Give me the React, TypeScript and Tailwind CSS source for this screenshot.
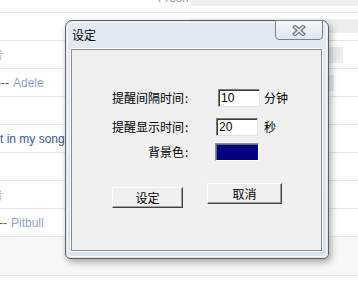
import React from "react";

const cjk = "font-['Noto_Sans_CJK_SC','Noto_Sans',sans-serif]";

function Row({ children, className = "" }: { children?: React.ReactNode; className?: string }) {
  return (
    <div className={`relative h-[28px] border-b border-[#e6e6e6] flex items-center ${className}`}>
      {children}
    </div>
  );
}

function CloseIcon() {
  return (
    <svg width="14" height="11" viewBox="0 0 14 11">
      <g strokeLinecap="square">
        <line x1="3" y1="2" x2="11" y2="9" stroke="#6a6f76" strokeWidth="4" />
        <line x1="11" y1="2" x2="3" y2="9" stroke="#6a6f76" strokeWidth="4" />
        <line x1="3" y1="2" x2="11" y2="9" stroke="#eef1f5" strokeWidth="1.6" />
        <line x1="11" y1="2" x2="3" y2="9" stroke="#eef1f5" strokeWidth="1.6" />
      </g>
    </svg>
  );
}

function Colon() {
  return <span className="inline-block w-[6px] pl-[1px] text-left">:</span>;
}

export default function App() {
  const sunken =
    "border border-t-[#7a7a7a] border-l-[#7a7a7a] border-r-[#e2e2e2] border-b-[#e2e2e2] shadow-[inset_1px_1px_0_#3c3c3c] bg-white";
  const btn =
    "h-[21px] flex items-center justify-center bg-[#f0f0f0] border border-t-white border-l-white border-r-[#404040] border-b-[#404040] shadow-[inset_-1px_-1px_0_#a0a0a0] text-[12px] leading-none text-black";

  return (
    <div className="relative w-[358px] h-[282px] overflow-hidden bg-white font-['Liberation_Sans',Arial,sans-serif] text-[12px]">
      {/* background page */}
      <div className="flex flex-col">
        <div className="relative h-[13px] border-b border-[#e6e6e6] flex items-start">
          <div className="w-[158px]" />
          <span className="w-[33px] text-[12px] leading-[12px] -mt-[8px] text-[#9a9a9a]">Fresh</span>
          <div className="flex-1 h-[6px] bg-[#eeeeee]" />
        </div>
        <Row className="items-start">
          <div className="ml-[190px] mt-[6px] w-[168px] h-[14px] bg-[#eeeeee]" />
        </Row>
        <Row>
          <span className="-ml-[9px] text-[12px] text-[#9fb1d8]">者</span>
          <div className="absolute left-[190px] top-[6px] w-[153px] h-[16px] bg-[#ececec]" />
        </Row>
        <Row>
          <span className="-ml-[3px] text-[#555]">---</span>
          <span className="ml-[4px] text-[#8ea4d0]">Adele</span>
          <div className="absolute left-[190px] top-[6px] w-[144px] h-[16px] bg-[#ececec]" />
        </Row>
        <Row />
        <Row>
          <span className="text-[#3b5a9a]">t in my song</span>
        </Row>
        <Row />
        <Row>
          <span className="-ml-[9px] text-[12px] text-[#9fb1d8]">者</span>
        </Row>
        <Row>
          <span className="-ml-[1px] text-[#555]">--</span>
          <span className="ml-[4px] text-[#8ea4d0]">Pitbull</span>
        </Row>
        <div className="h-[39px] bg-[#f8f8f8] border-b border-[#f3e2d3]" />
      </div>

      {/* dialog window */}
      <div className="absolute left-[65px] top-[20px] w-[264px] h-[239px] rounded-t-[7px] rounded-b-[5px] border border-[#5e6166] bg-gradient-to-b from-[#e2e9f2] via-[#dde6f1] to-[#d8e3ef] shadow-[2px_3px_7px_rgba(0,0,0,0.35)] flex flex-col px-[5px] pr-[6px] pb-[7px]">
        <div className="absolute inset-[1px] rounded-t-[6px] rounded-b-[4px] border border-[#f7f9fc] pointer-events-none" />
        <div className={`relative h-[28px] flex items-center pl-[1px] ${cjk} text-[12px] text-black`}>
          设定
        </div>
        <div className="absolute right-[5px] -top-[1px] w-[48px] h-[20px] border border-[#7d828a] rounded-b-[4px] bg-gradient-to-b from-[#f4f6f9] to-[#dfe6ef] flex items-center justify-center">
          <CloseIcon />
        </div>
        <div className={`relative flex-1 border border-[#8a8a8a] bg-[#f0f0f0] shadow-[0_0_0_1px_#ffffff] flex flex-col ${cjk} text-[12px] text-black`}>
          <div className="mt-[39px] flex items-center h-[18px]">
            <div className="w-[118px] text-right">提醒间隔时间<Colon /></div>
            <div className={`ml-[28px] w-[42px] h-[18px] ${sunken} flex items-center pl-[2px] font-['Liberation_Sans',Arial,sans-serif] text-[12px]`}>10</div>
            <div className="ml-[4px]">分钟</div>
          </div>
          <div className="mt-[11px] flex items-center h-[18px]">
            <div className="w-[118px] text-right">提醒显示时间<Colon /></div>
            <div className={`ml-[26px] w-[42px] h-[18px] ${sunken} flex items-center pl-[2px] font-['Liberation_Sans',Arial,sans-serif] text-[12px]`}>20</div>
            <div className="ml-[6px]">秒</div>
          </div>
          <div className="mt-[7px] flex items-center h-[18px]">
            <div className="w-[118px] text-right">背景色<Colon /></div>
            <div className="ml-[25px] w-[44px] h-[18px] border border-t-[#8c8c8c] border-l-[#8c8c8c] border-r-white border-b-white shadow-[inset_1px_1px_0_#6a6a6a] bg-[#000080]" />
          </div>
          <div className="mt-[22px] flex items-start">
            <div className={`ml-[40px] mt-[4px] w-[71px] ${btn}`}>设定</div>
            <div className={`ml-[24px] w-[75px] ${btn}`}>取消</div>
          </div>
        </div>
      </div>
    </div>
  );
}
